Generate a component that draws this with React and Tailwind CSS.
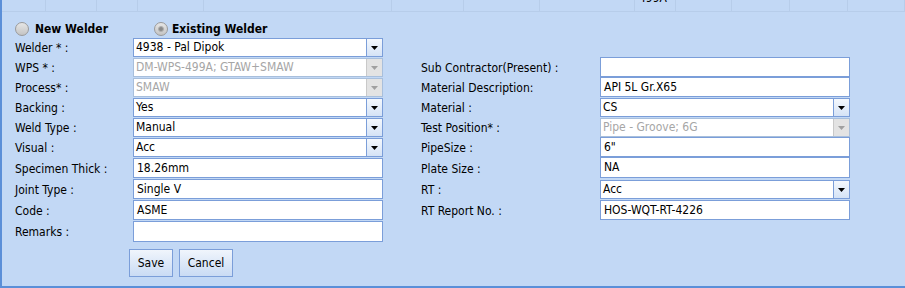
import React from "react";

const font = "font-['DejaVu_Sans_Condensed','DejaVu_Sans',sans-serif]";

function Arrow({ disabled }) {
  return (
    <div
      className={`w-[16px] h-full flex items-center justify-center border-l ${
        disabled
          ? "border-[#c9c9c9] bg-[#e3e3e3]"
          : "border-[#7b9ed9] bg-gradient-to-b from-[#f4f8fd] to-[#d5e3f6]"
      }`}
    >
      <svg width="7" height="4" viewBox="0 0 7 4">
        <path d="M0 0H7L3.5 4Z" fill={disabled ? "#a0a0a0" : "#000"} />
      </svg>
    </div>
  );
}

function Select({ value, disabled, h = "h-[19px]" }) {
  return (
    <div
      className={`${h} w-[250px] flex border ${
        disabled ? "border-[#a8bfdc] bg-white text-[#a6a6a6]" : "border-[#7b9ed9] bg-white text-black"
      }`}
    >
      <div className="flex-1 pl-[2px] text-[12px] leading-[17px] whitespace-nowrap overflow-hidden">
        {value}
      </div>
      <Arrow disabled={disabled} />
    </div>
  );
}

function Input({ value, h = "h-[20px]" }) {
  return (
    <div className={`${h} w-[250px] border border-[#7b9ed9] bg-white pl-[3px] text-[12px] leading-[18px] text-black whitespace-nowrap`}>
      {value}
    </div>
  );
}

function Label({ children }) {
  return <div className="text-[12px] leading-[18px] text-black whitespace-nowrap self-center">{children}</div>;
}

function Radio({ checked }) {
  return (
    <div className="w-[14px] h-[14px] rounded-full border border-[#9a9a9a] bg-gradient-to-b from-[#e6e6e6] to-[#c4c4c4] flex items-center justify-center">
      {checked && <div className="w-[6px] h-[6px] rounded-full bg-[#8a8a8a] border border-[#b0b0b0]" />}
    </div>
  );
}

const cells = [44, 51, 41, 66, 188, 72, 76, 95, 41, 56, 58, 58, 57];

export default function App() {
  return (
    <div className={`w-[905px] h-[288px] bg-[#c2d8f5] border-l-2 border-b-2 border-[#5b8fd8] ${font} overflow-hidden`}>
      <div className="h-[12px] flex border-b border-[#b7cdea] overflow-hidden">
        {cells.map((w, i) => (
          <div key={i} style={{ width: w }} className="h-full border-r border-[#b7cdea] shrink-0 relative overflow-hidden">
            {i === 8 && (
              <span className="absolute left-[4px] top-[-9px] text-[12px] leading-[14px] text-black">499A</span>
            )}
          </div>
        ))}
      </div>
      <div className="pl-[13px]">
        <div className="mt-[7px] h-[19px] flex items-center">
          <Radio />
          <span className="ml-[6px] text-[12px] font-bold text-black">New Welder</span>
          <div className="ml-[46px]">
            <Radio checked />
          </div>
          <span className="ml-[4px] text-[12px] font-bold text-black">Existing Welder</span>
        </div>
        <div className="grid grid-cols-[118px_250px_38px_179px_250px] grid-rows-[20px_20px_20px_20px_20px_20px_21px_21px_21px_21px]">
          <Label>Welder * :</Label>
          <Select value="4938 - Pal Dipok" />
          <div />
          <div />
          <div />

          <Label>WPS * :</Label>
          <Select value="DM-WPS-499A; GTAW+SMAW" disabled />
          <div />
          <Label>Sub Contractor(Present) :</Label>
          <Input value="" h="h-[20px] -mt-[1px]" />

          <Label>Process* :</Label>
          <Select value="SMAW" disabled />
          <div />
          <Label>Material Description:</Label>
          <Input value="API 5L Gr.X65" h="h-[20px] -mt-[1px]" />

          <Label>Backing :</Label>
          <Select value="Yes" />
          <div />
          <Label>Material :</Label>
          <Select value="CS" />

          <Label>Weld Type :</Label>
          <Select value="Manual" />
          <div />
          <Label>Test Position* :</Label>
          <Select value="Pipe - Groove; 6G" disabled />

          <Label>Visual :</Label>
          <Select value="Acc" />
          <div />
          <Label>PipeSize :</Label>
          <Input value={'6"'} h="h-[20px] -mt-[1px]" />

          <Label>Specimen Thick :</Label>
          <Input value="18.26mm" />
          <div />
          <Label>Plate Size :</Label>
          <Input value="NA" h="h-[21px] -mt-[1px]" />

          <Label>Joint Type :</Label>
          <Input value="Single V" />
          <div />
          <Label>RT :</Label>
          <div className="pt-[1px]">
            <Select value="Acc" />
          </div>

          <Label>Code :</Label>
          <Input value="ASME" />
          <div />
          <Label>RT Report No. :</Label>
          <Input value="HOS-WQT-RT-4226" />

          <Label>Remarks :</Label>
          <Input value="" h="h-[21px]" />
          <div />
          <div />
          <div />
        </div>
        <div className="mt-[7px] ml-[114px] flex gap-[6px]">
          <button className="h-[28px] w-[44px] border border-[#7b9ed9] bg-gradient-to-b from-[#f0f5fc] to-[#c9dbf4] text-[12px] text-black">
            Save
          </button>
          <button className="h-[28px] w-[54px] border border-[#7b9ed9] bg-gradient-to-b from-[#f0f5fc] to-[#c9dbf4] text-[12px] text-black">
            Cancel
          </button>
        </div>
      </div>
    </div>
  );
}
